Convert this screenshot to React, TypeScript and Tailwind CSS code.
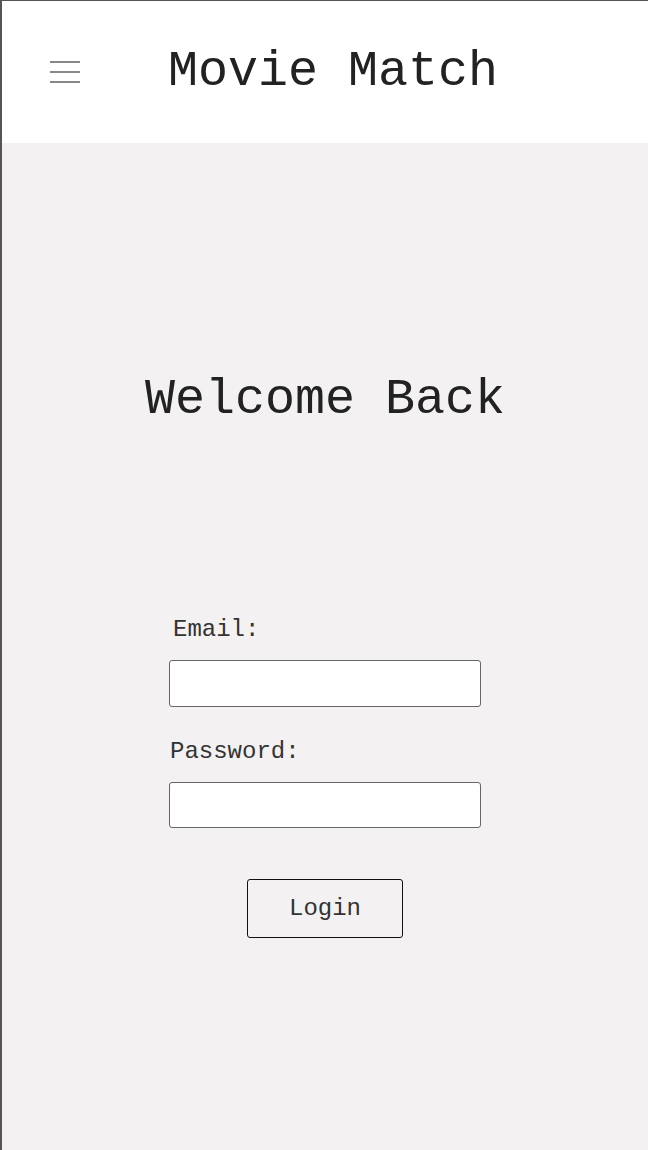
export default function App() {
  return (
    <div
      className="flex h-[1150px] w-[648px] flex-col border-l-2 border-t border-[#555] bg-[#f3f1f2] text-[#222]"
      style={{ fontFamily: '"Liberation Mono", "Courier New", monospace' }}
    >
      {/* Header */}
      <header className="flex h-[142px] shrink-0 items-center bg-white">
        <button className="ml-[48px] flex h-[24px] w-[30px] flex-col justify-between py-[1px]">
          <span className="block h-[2px] w-full bg-[#888]" />
          <span className="block h-[2px] w-full bg-[#888]" />
          <span className="block h-[2px] w-full bg-[#888]" />
        </button>
        <h1 className="ml-[88px] text-[50px] leading-[50px] text-[#222]">Movie Match</h1>
      </header>

      {/* Main */}
      <main className="flex flex-1 flex-col items-center">
        <h2 className="mt-[232px] text-[50px] leading-[50px]">Welcome Back</h2>

        <form className="mt-[193px] flex w-[312px] flex-col" onSubmit={(e) => e.preventDefault()}>
          <label className="ml-[4px] text-[24px] leading-[24px] text-[#333]">Email:</label>
          <input
            type="email"
            className="mt-[18px] h-[47px] w-full rounded-[3px] border border-[#666] bg-white px-2 outline-none"
          />
          <label className="ml-[1px] mt-[33px] text-[24px] leading-[24px] text-[#333]">Password:</label>
          <input
            type="password"
            className="mt-[18px] h-[46px] w-full rounded-[3px] border border-[#666] bg-white px-2 outline-none"
          />
          <button
            type="submit"
            className="mx-auto mt-[51px] h-[59px] w-[156px] rounded-[3px] border-[1.5px] border-[#111] text-[24px] text-[#333]"
          >
            Login
          </button>
        </form>
      </main>
    </div>
  );
}
